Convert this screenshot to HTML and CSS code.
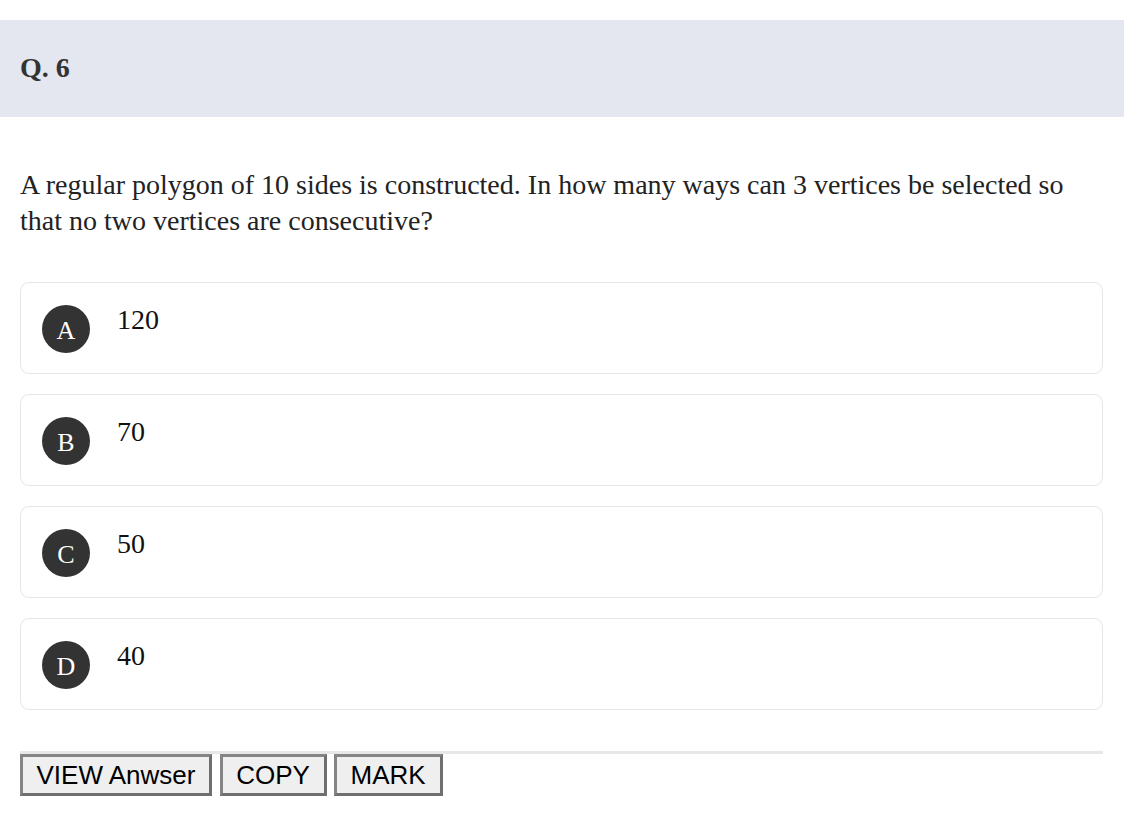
FILE: index.html
```html
<!DOCTYPE html>
<html lang="en">
<head>
<meta charset="utf-8">
<title>Q. 6</title>
<link rel="stylesheet" href="styles.css">
</head>
<body>
<div class="q-header">
  <h2 class="q-num">Q. 6</h2>
</div>
<div class="q-body">
  <p class="q-text">A regular polygon of 10 sides is constructed. In how many ways can 3 vertices be selected so that no two vertices are consecutive?</p>
  <div class="options">
    <div class="option"><span class="opt-letter">A</span><span class="opt-text">120</span></div>
    <div class="option"><span class="opt-letter">B</span><span class="opt-text">70</span></div>
    <div class="option"><span class="opt-letter">C</span><span class="opt-text">50</span></div>
    <div class="option"><span class="opt-letter">D</span><span class="opt-text">40</span></div>
  </div>
  <div class="actions">
    <button class="btn">VIEW Anwser</button>
    <button class="btn">COPY</button>
    <button class="btn">MARK</button>
  </div>
</div>
</body>
</html>
```

FILE: styles.css
```css
html, body {
  margin: 0;
  padding: 0;
  background: #ffffff;
}
body {
  font-family: "Liberation Serif", "Times New Roman", serif;
  color: #222222;
}
.q-header {
  margin-top: 20px;
  background: #e4e6f0;
  padding: 30px 20px 31px;
}
.q-num {
  margin: 0;
  font-size: 28px;
  line-height: 36px;
  font-weight: bold;
  color: #333333;
}
.q-body {
  padding: 0 21px 0 20px;
}
.q-text {
  margin: 50px 0 43px;
  font-size: 28px;
  line-height: 36px;
  color: #222222;
}
.options {
  display: flex;
  flex-direction: column;
  gap: 20px;
}
.option {
  display: flex;
  align-items: flex-start;
  gap: 27px;
  border: 1px solid #e6e6e6;
  border-radius: 9px;
  padding: 22px 21px 20px;
}
.opt-letter {
  flex: none;
  width: 48px;
  height: 48px;
  border-radius: 50%;
  background: #333333;
  color: #ffffff;
  font-size: 26px;
  display: flex;
  align-items: center;
  justify-content: center;
  padding-top: 3px;
  box-sizing: border-box;
}
.opt-text {
  font-size: 28px;
  line-height: normal;
  color: #111111;
  margin-top: -1px;
}
.actions {
  margin-top: 41px;
  border-top: 3px solid #e8e8e8;
  padding-top: 0;
  font-family: "Liberation Sans", Arial, sans-serif;
  font-size: 26px;
  line-height: 0;
}
.btn {
  font-family: "Liberation Sans", Arial, sans-serif;
  font-size: 26px;
  line-height: 30px;
  color: #000000;
  background: #efefef;
  border: 3px solid;
  border-color: #858585 #6f6f6f #6f6f6f #858585;
  padding: 3px 14px 3px 13.5px;
  margin: 0;
  vertical-align: top;
}
```
